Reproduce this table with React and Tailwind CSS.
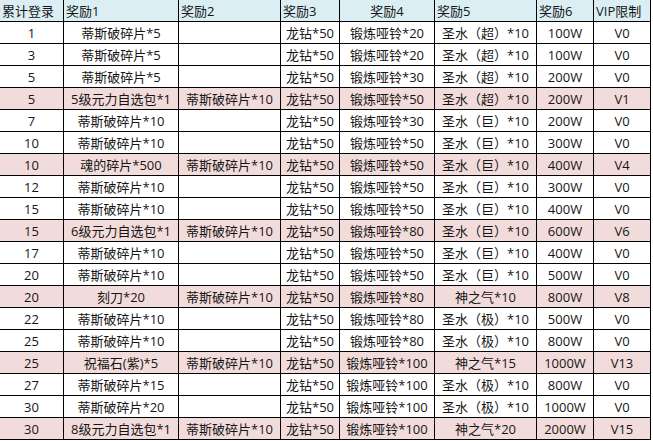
import React from 'react';

// 表头
const headers = ['累计登录', '奖励1', '奖励2', '奖励3', '奖励4', '奖励5', '奖励6', 'VIP限制'];

// 每行: [累计登录, 奖励1, 奖励2, 奖励3, 奖励4, 奖励5, 奖励6, VIP, 是否高亮]
const rows = [
  ['1', '蒂斯破碎片*5', '', '龙钻*50', '锻炼哑铃*20', '圣水（超）*10', '100W', 'V0', false],
  ['3', '蒂斯破碎片*5', '', '龙钻*50', '锻炼哑铃*20', '圣水（超）*10', '100W', 'V0', false],
  ['5', '蒂斯破碎片*5', '', '龙钻*50', '锻炼哑铃*30', '圣水（超）*10', '200W', 'V0', false],
  ['5', '5级元力自选包*1', '蒂斯破碎片*10', '龙钻*50', '锻炼哑铃*50', '圣水（超）*10', '200W', 'V1', true],
  ['7', '蒂斯破碎片*10', '', '龙钻*50', '锻炼哑铃*30', '圣水（巨）*10', '200W', 'V0', false],
  ['10', '蒂斯破碎片*10', '', '龙钻*50', '锻炼哑铃*50', '圣水（巨）*10', '300W', 'V0', false],
  ['10', '魂的碎片*500', '蒂斯破碎片*10', '龙钻*50', '锻炼哑铃*50', '圣水（巨）*10', '400W', 'V4', true],
  ['12', '蒂斯破碎片*10', '', '龙钻*50', '锻炼哑铃*50', '圣水（巨）*10', '300W', 'V0', false],
  ['15', '蒂斯破碎片*10', '', '龙钻*50', '锻炼哑铃*50', '圣水（巨）*10', '400W', 'V0', false],
  ['15', '6级元力自选包*1', '蒂斯破碎片*10', '龙钻*50', '锻炼哑铃*80', '圣水（巨）*10', '600W', 'V6', true],
  ['17', '蒂斯破碎片*10', '', '龙钻*50', '锻炼哑铃*50', '圣水（巨）*10', '400W', 'V0', false],
  ['20', '蒂斯破碎片*10', '', '龙钻*50', '锻炼哑铃*50', '圣水（巨）*10', '500W', 'V0', false],
  ['20', '刻刀*20', '蒂斯破碎片*10', '龙钻*50', '锻炼哑铃*80', '神之气*10', '800W', 'V8', true],
  ['22', '蒂斯破碎片*10', '', '龙钻*50', '锻炼哑铃*80', '圣水（极）*10', '500W', 'V0', false],
  ['25', '蒂斯破碎片*10', '', '龙钻*50', '锻炼哑铃*80', '圣水（极）*10', '800W', 'V0', false],
  ['25', '祝福石(紫)*5', '蒂斯破碎片*10', '龙钻*50', '锻炼哑铃*100', '神之气*15', '1000W', 'V13', true],
  ['27', '蒂斯破碎片*15', '', '龙钻*50', '锻炼哑铃*100', '圣水（极）*10', '800W', 'V0', false],
  ['30', '蒂斯破碎片*20', '', '龙钻*50', '锻炼哑铃*100', '圣水（极）*10', '1000W', 'V0', false],
  ['30', '8级元力自选包*1', '蒂斯破碎片*10', '龙钻*50', '锻炼哑铃*100', '神之气*20', '2000W', 'V15', true],
];

const cell = 'h-[22px] border-r border-b border-black flex items-center whitespace-nowrap overflow-hidden';

const App = () => {
  return (
    <div className="w-[653px] h-[441px] bg-white overflow-hidden">
      <div
        className="grid grid-cols-[64px_115px_102px_59px_95px_102px_57px_57px] text-[13px] leading-[22px] text-[#151515]"
        style={{ fontFamily: '"Open Sans", "Noto Sans CJK SC", sans-serif' }}
      >
        {headers.map((h, i) => (
          <div
            key={h}
            className={`${cell} bg-[#daeef3] ${i === 4 ? 'justify-center' : 'justify-start pl-[2px]'}`}
          >
            {h}
          </div>
        ))}

        {rows.map((row, r) =>
          row.slice(0, 8).map((v, c) => (
            <div
              key={`${r}-${c}`}
              className={`${cell} justify-center ${row[8] ? 'bg-[#f2dcdb]' : 'bg-white'}`}
            >
              {v}
            </div>
          ))
        )}
      </div>
    </div>
  );
};

export default App;
